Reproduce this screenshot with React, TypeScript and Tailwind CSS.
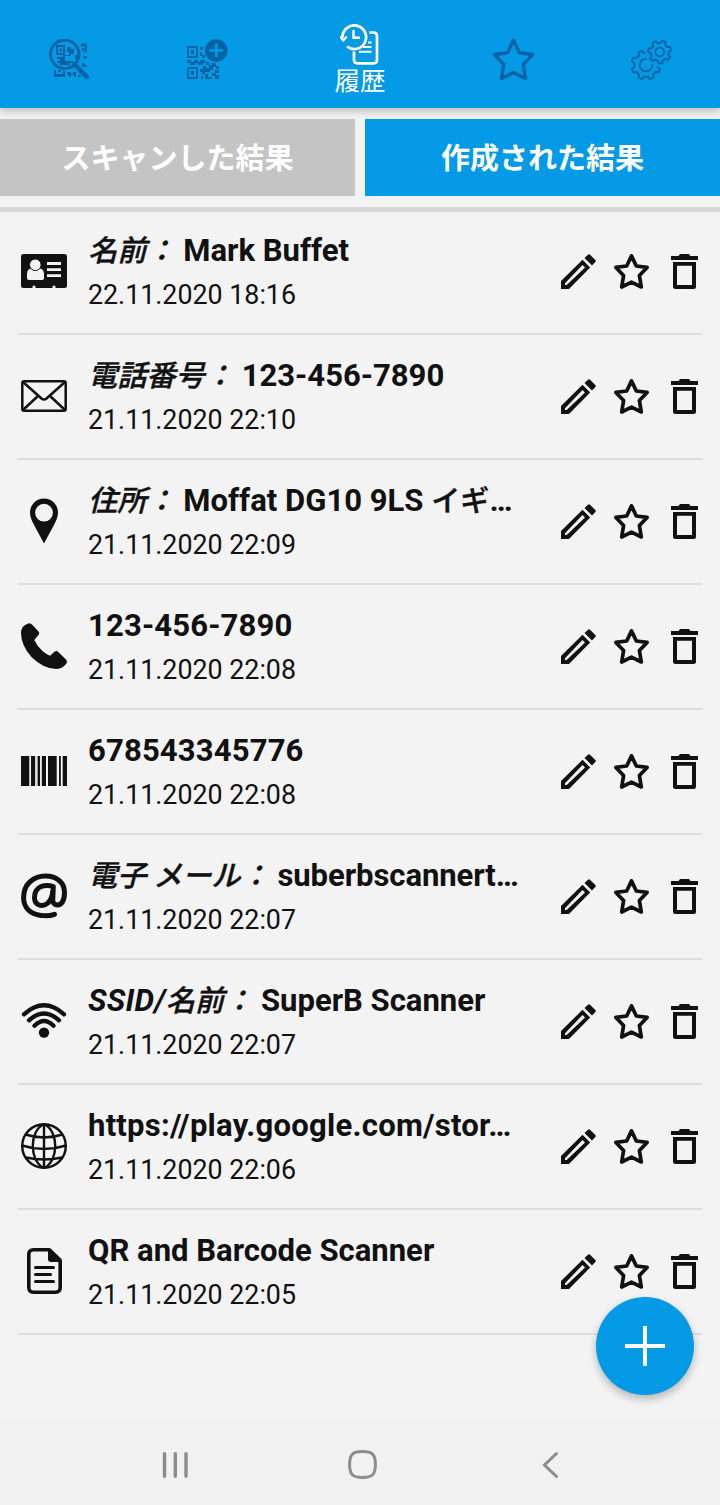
import React from 'react';

interface HistoryItem {
    id: number;
    icon: React.ReactNode;
    label?: string;
    latinLabel?: string;
    value: string;
    suffix?: string;
    tracking?: string;
    date: string;
}

// Outline of a cog with rounded teeth, centred on cx / cy
const gearPath = (cx: number, cy: number, outer: number, inner: number, teeth: number, turn: number) => {
    const step = (Math.PI * 2) / teeth;
    const points: string[] = [];
    for (let i = 0; i < teeth; i++) {
        const a = turn + i * step;
        const parts: [number, number][] = [
            [a - step * 0.3, inner],
            [a - step * 0.17, outer],
            [a + step * 0.17, outer],
            [a + step * 0.3, inner],
        ];
        parts.forEach(([angle, r]) => {
            points.push(`${(cx + Math.cos(angle) * r).toFixed(2)} ${(cy + Math.sin(angle) * r).toFixed(2)}`);
        });
    }
    return `M${points.join('L')}Z`;
};

const ScanIcon = () => (
    <svg width="40" height="41" viewBox="0 0 40 41" fill="currentColor">
        <path d="M32 4.500h6v9h-2.500v-6H32zM33 9h2v3h-2zM34 17h4v3h-3zM33 24h3v2h2v2h-5zM5 31h2v4h7v-3h2v6H5zM9 31h3v2H9zM18 33h4v2h2v-2h3v5h-2v-2h-3v2h-2v-2h-2zM29 36h3v2h-3z" />
        <path d="M7 6h9v10H7zM9 8v6h5V8z" fillRule="evenodd" />
        <path d="M10.500 9.500h2.500v3h-2.500zM18 8h4v2h3v5h-3v2h-6v3H8v-2h6v-2h6v-3h-2zM8 22h3v-2h5v2h8v2h-3v2H11v-2H8zM26 16h2v4h-2z" />
        <circle cx="15.700" cy="15.300" r="14.200" fill="none" stroke="currentColor" strokeWidth="3" />
        <path d="M26.500 26.500L37.500 37.500" stroke="#049ae6" strokeWidth="7" />
        <path d="M25.500 25.500L37.800 37.800" stroke="currentColor" strokeWidth="4.500" strokeLinecap="round" />
    </svg>
);

const CreateIcon = () => (
    <svg width="41" height="41" viewBox="0 0 41 41" fill="currentColor">
        <path fillRule="evenodd" d="M0 7h11v12H0zM2 9v8h7V9zM0 28h11v12H0zM2 30v8h7v-8z" />
        <path d="M4 11h3v4H4zM4 32h3v4H4zM13 8h3v3h-3zM13 13h2v3h3v3h-3v-2h-2zM0 21h4v2h3v-2h4v2h2v-2h5v2h4v3h-3v-2h-3v2h-5v-2H8v2H3v-2H0zM24 24h5v3h3v3h-3v-2h-3v3h-3v2h-5v2h-3v-2h-2v-3h3v-3h3v2h3v-3h3zM28 31h4v3h-3v2h3v4h-4v-3h-3v-3h3zM14 37h2v3h-2zM18 35h3v3h4v2h-7z" />
        <circle cx="29.300" cy="11.500" r="11.300" />
        <path d="M29.300 4.500v14M22.300 11.500h14" stroke="#049ae6" strokeWidth="2.500" />
    </svg>
);

const HistoryIcon = () => (
    <svg width="40" height="43" viewBox="0 0 40 43" fill="none" stroke="currentColor" strokeWidth="2.700">
        <path d="M29.500 9.500H33.500Q37 9.500 37 13V37Q37 40.300 33.500 40.300H17.500Q14 40.300 14 37V28.500" />
        <path d="M2.500 14.500A11.800 11.800 0 1 1 7 23.500" />
        <path d="M0.300 13.500L3.300 17.500L6.800 13.500" strokeWidth="2.200" />
        <path d="M13.500 7V14.700H20" strokeWidth="2.400" />
        <path d="M28 19.500h3.500M23 24h8.500M19 28.800h12.500" strokeWidth="2" />
    </svg>
);

const StarIcon = ({ size, weight }: { size: number; weight: number }) => (
    <svg width={size} height={size} viewBox="0 0 35 35" fill="none" stroke="currentColor" strokeWidth={weight} strokeLinejoin="round">
        <path d="M17.500 1.900L22.300 12L33.100 13.400L25.400 21.500L27.300 33L17.500 28.200L7.700 33L9.600 21.500L1.900 13.400L12.700 12Z" />
    </svg>
);

const SettingsIcon = () => (
    <svg width="42" height="42" viewBox="0 0 42 42" fill="none" stroke="currentColor" strokeWidth="1.900" strokeLinejoin="round">
        <path d={gearPath(16, 26, 14.7, 11.8, 8, 0.39)} />
        <circle cx="16" cy="26" r="6.300" />
        <path d={gearPath(29.7, 13, 12, 9, 7, -0.3)} fill="#049ae6" stroke="#049ae6" strokeWidth="6" />
        <path d={gearPath(29.7, 13, 11.6, 9, 7, -0.3)} />
        <circle cx="29.700" cy="13" r="4.400" />
    </svg>
);

const ContactIcon = () => (
    <svg width="46" height="34" viewBox="0 0 46 34">
        <rect width="46" height="34" rx="2.500" fill="#111" />
        <path d="M6 24V20Q6 14.500 11 14.500H18Q23 14.500 23 20V24Q23 26 21 26H8Q6 26 6 24Z" fill="#f3f3f3" />
        <circle cx="14.300" cy="10.800" r="5.800" fill="#f3f3f3" stroke="#111" strokeWidth="1" />
        <path d="M26 9.500h14M26 15.700h14M26 21.700h14" stroke="#f3f3f3" strokeWidth="2.800" />
        <path d="M11.500 34v-1.500q1.500-2 3 0V34zM31.500 34v-1.500q1.500-2 3 0V34z" fill="#f3f3f3" />
    </svg>
);

const EnvelopeIcon = () => (
    <svg width="46" height="32" viewBox="0 0 46 32" fill="none" stroke="#111" strokeWidth="2.500">
        <rect x="1.300" y="1.300" width="43.400" height="29.400" rx="2" />
        <path d="M2 2L20.500 18.500Q23 20.500 25.500 18.500L44 2M2.500 29.500L17 16M43.500 29.500L29 16" />
    </svg>
);

const PinIcon = () => (
    <svg width="28" height="46" viewBox="0 0 28 46" fill="#111">
        <path fillRule="evenodd" d="M14 0.500A14 14 0 0 0 0 14.500C0 18.500 1.500 21.500 3 25L14 45.500L25 25C26.500 21.500 28 18.500 28 14.500A14 14 0 0 0 14 0.500ZM14 5.800a8.900 8.900 0 1 1 0 17.800a8.900 8.900 0 0 1 0-17.800Z" />
    </svg>
);

const PhoneIcon = () => (
    <svg width="46" height="46" viewBox="0 0 46 46" fill="#111">
        <path d="M8.500 0.300Q10 0.300 11.500 2L17.300 8.200Q18.800 10 17.800 11.600L13.300 17Q16 23 21.500 28Q25.500 31.500 29 32.800L33.500 28.700Q35.500 27.300 37.300 29L45 36.500Q46.500 38.300 45.500 40.500Q41 46 35 46Q22 45.500 10.500 34Q0 22.500 0 9.500Q0.300 3 6.500 0.700Z" />
    </svg>
);

const BarcodeIcon = () => (
    <svg width="46" height="30" viewBox="0 0 46 30" fill="#111">
        <path d="M0 0h8.300v30H0zM10 0h4v30h-4zM16.600 0h2.400v30h-2.400zM20.800 0h4.200v30h-4.200zM27 0h8.700v30H27zM38 0h1.800v30H38zM41.700 0H46v30h-4.300z" />
        <path d="M14.500 0h.8v30h-.8z" fill="#aaa" />
    </svg>
);

const AtIcon = () => (
    <svg width="46" height="46" viewBox="0 0 46 46" fill="none" stroke="#111" strokeWidth="5" strokeLinecap="round" strokeLinejoin="round">
        <path d="M33.500 41.300C29 43 24 43 20 42.400C9 41 2.600 34.500 2.600 24.500C2.600 11.500 12 3.100 24.500 3.100C36 3.100 43.500 10 43.500 19.500C43.500 28.500 40 32 36.500 32C33 32 31.500 29.500 31.800 26L32.300 13.500C25 11 13.500 12.500 13.500 24.500C13.500 33.500 22.500 34 27 30C30 27 31.500 22 31.800 18" />
    </svg>
);

const WifiIcon = () => (
    <svg width="46" height="36" viewBox="0 0 46 36" fill="none" stroke="#111" strokeWidth="4.300" strokeLinecap="round">
        <path d="M3 11.300Q23-6.600 43 11.300M8 17.300Q23 3.600 38 17.300M13.500 22.800Q23 13.300 32.500 22.800" />
        <circle cx="23" cy="29.600" r="5.200" fill="#111" stroke="none" />
    </svg>
);

const GlobeIcon = () => (
    <svg width="46" height="46" viewBox="0 0 46 46" fill="none" stroke="#111" strokeWidth="2.400">
        <circle cx="23" cy="23" r="21.800" />
        <path d="M23 1V45M23 1C8 8 8 38 23 45M23 1C38 8 38 38 23 45M4.500 11.500Q23 17.500 41.500 11.500M1 22.500Q23 29.500 45 22.500M5 34.500Q23 38.500 41 34.500" />
    </svg>
);

const DocumentIcon = () => (
    <svg width="35" height="46" viewBox="0 0 35 46" fill="none" stroke="#111" strokeWidth="3.600">
        <path d="M22 1.800H6.500Q1.800 1.800 1.800 6.500V39.500Q1.800 44.200 6.500 44.200H28.500Q33.200 44.200 33.200 39.500V13Z" />
        <path d="M21 0.500H23.500L34.500 11V14H24Q21 14 21 11Z" fill="#111" stroke="none" />
        <path d="M8.500 19.500h18M8.500 26.500h15M8.500 33.500h18" strokeWidth="3" strokeLinecap="round" />
    </svg>
);

const EditIcon = () => (
    <svg width="35" height="35" viewBox="0 0 35 35" fill="currentColor">
        <path fillRule="evenodd" d="M0 27L21.500 5.800L29.200 13.500L8 35H0ZM4 29.300V31H5.700L24 13.500L21.500 11Z" />
        <path d="M23.500 4L27 0.700Q28 -0.300 29 0.700L34.300 6Q35.300 7 34.300 8L31 11.500Z" />
    </svg>
);

const TrashIcon = () => (
    <svg width="27" height="35" viewBox="0 0 27 35" fill="currentColor">
        <path fillRule="evenodd" d="M0 2H7.500L9 0H18L19.500 2H27V6H0ZM2 8H25V32.500Q25 35 22.500 35H4.500Q2 35 2 32.500ZM6 11.800V31H21V11.800Z" />
    </svg>
);

const items: HistoryItem[] = [
    { id: 1, icon: <ContactIcon />, label: '名前：', value: 'Mark Buffet', date: '22.11.2020 18:16' },
    { id: 2, icon: <EnvelopeIcon />, label: '電話番号：', value: '123-456-7890', date: '21.11.2020 22:10' },
    { id: 3, icon: <PinIcon />, label: '住所：', value: 'Moffat DG10 9LS ', suffix: 'イギ', date: '21.11.2020 22:09' },
    { id: 4, icon: <PhoneIcon />, value: '123-456-7890', tracking: 'tracking-[0.15px]', date: '21.11.2020 22:08' },
    { id: 5, icon: <BarcodeIcon />, value: '678543345776', tracking: 'tracking-[0.15px]', date: '21.11.2020 22:08' },
    { id: 6, icon: <AtIcon />, label: '電子 メール：', value: 'suberbscannert…', tracking: 'tracking-[-0.07px]', date: '21.11.2020 22:07' },
    { id: 7, icon: <WifiIcon />, latinLabel: 'SSID/', label: '名前：', value: 'SuperB Scanner', date: '21.11.2020 22:07' },
    { id: 8, icon: <GlobeIcon />, value: 'https://play.google.com/stor…', tracking: 'tracking-[0.24px]', date: '21.11.2020 22:06' },
    { id: 9, icon: <DocumentIcon />, value: 'QR and Barcode Scanner', date: '21.11.2020 22:05' },
];

const cjkText = "font-['Noto_Sans_CJK_JP',sans-serif] text-[29.2px] leading-[0] font-medium [-webkit-text-stroke:0.4px_#111]";

const HistoryRow = ({ item }: { item: HistoryItem }) => (
    <li className="mx-[18px] flex h-[125px] border-b-2 border-[#dedede] pr-1 pl-[3px]">
        <div className="flex h-[122px] w-[46px] shrink-0 items-center justify-center">{item.icon}</div>
        <div className="ml-[21px] min-w-0 flex-1 pt-[23px]">
            <div className="h-9 text-[31.05px] leading-9 font-bold whitespace-pre">
                {item.latinLabel && <span className="tracking-[0.2px] italic">{item.latinLabel}</span>}
                {item.label && <span className={`${cjkText} italic`}>{item.label}</span>}
                {item.label && ' '}
                <span className={item.tracking}>{item.value}</span>
                {item.suffix && (
                    <>
                        <span className={cjkText}>{item.suffix}</span>…
                    </>
                )}
            </div>
            <div className="mt-[10px] text-[26.8px] leading-8">{item.date}</div>
        </div>
        <div className="flex h-[123px] shrink-0 items-center">
            <button><EditIcon /></button>
            <button className="ml-[18px]"><StarIcon size={35} weight={3.7} /></button>
            <button className="ml-[22px]"><TrashIcon /></button>
        </div>
    </li>
);

const App: React.FC = () => {
    return (
        <div className="relative flex h-[1505px] w-[720px] flex-col overflow-hidden bg-[#f3f3f3] font-['Roboto','Noto_Sans_CJK_JP',sans-serif] text-[#111]">
            <header className="flex h-[108px] shrink-0 bg-[#049ae6] text-[#0463a4] shadow-[0_2px_9px_rgba(0,0,0,0.28)]">
                <button className="flex w-[138px] items-center justify-center pt-[11px]"><ScanIcon /></button>
                <button className="flex w-[138px] items-center justify-center pt-[11px]"><CreateIcon /></button>
                <button className="flex w-[168px] flex-col items-center pt-[23px] text-white">
                    <HistoryIcon />
                    <span className="mt-0.5 text-[25.500px] leading-[26px]">履歴</span>
                </button>
                <button className="flex w-[138px] items-center justify-center pt-[10px]"><StarIcon size={43} weight={2.8} /></button>
                <button className="flex w-[138px] items-center justify-center pt-[11px]"><SettingsIcon /></button>
            </header>

            <div className="mt-[11px] flex h-[77px] shrink-0 gap-[10px] font-['Noto_Sans_CJK_JP',sans-serif] text-[29px] font-bold text-white">
                <button className="flex-1 bg-[#c4c4c4] pb-0.5">スキャンした結果</button>
                <button className="flex-1 bg-[#049ae6] pb-0.5">作成された結果</button>
            </div>

            <div className="mt-[11px] h-[5px] shrink-0 bg-[#d8d8d8]" />

            <ul className="-mt-0.5 flex-1">
                {items.map((item) => (
                    <HistoryRow key={item.id} item={item} />
                ))}
            </ul>

            {/* Add button */}
            <button className="absolute top-[1297px] left-[596px] flex size-[98px] items-center justify-center rounded-full bg-[#049ae6] shadow-[0_4px_8px_rgba(0,0,0,0.26)]">
                <svg width="40" height="40" viewBox="0 0 40 40" stroke="#fff" strokeWidth="4">
                    <path d="M20 0v40M0 20h40" />
                </svg>
            </button>

            {/* System navigation */}
            <nav className="flex h-[85px] shrink-0 items-center bg-[#f1f1f1] pt-1 pl-[162px]">
                <svg width="26" height="28" viewBox="0 0 26 28" stroke="#8c8c8c" strokeWidth="3.400" strokeLinecap="round">
                    <path d="M2.500 2.700v22.600M13.300 2.700v22.600M24 2.700v22.600" />
                </svg>
                <svg className="ml-[160px]" width="29" height="29" viewBox="0 0 29 29" fill="none" stroke="#8c8c8c" strokeWidth="3">
                    <path d="M14.500 1.600C24.500 1.600 27.400 4.500 27.400 14.500S24.500 27.400 14.500 27.400S1.600 24.500 1.600 14.500S4.500 1.600 14.500 1.600Z" />
                </svg>
                <svg className="ml-[165px]" width="17" height="28" viewBox="0 0 17 28" fill="none" stroke="#8c8c8c" strokeWidth="3" strokeLinecap="round">
                    <path d="M14.500 2.500L2.500 14L14.500 25.500" />
                </svg>
            </nav>
        </div>
    );
};

export default App;
